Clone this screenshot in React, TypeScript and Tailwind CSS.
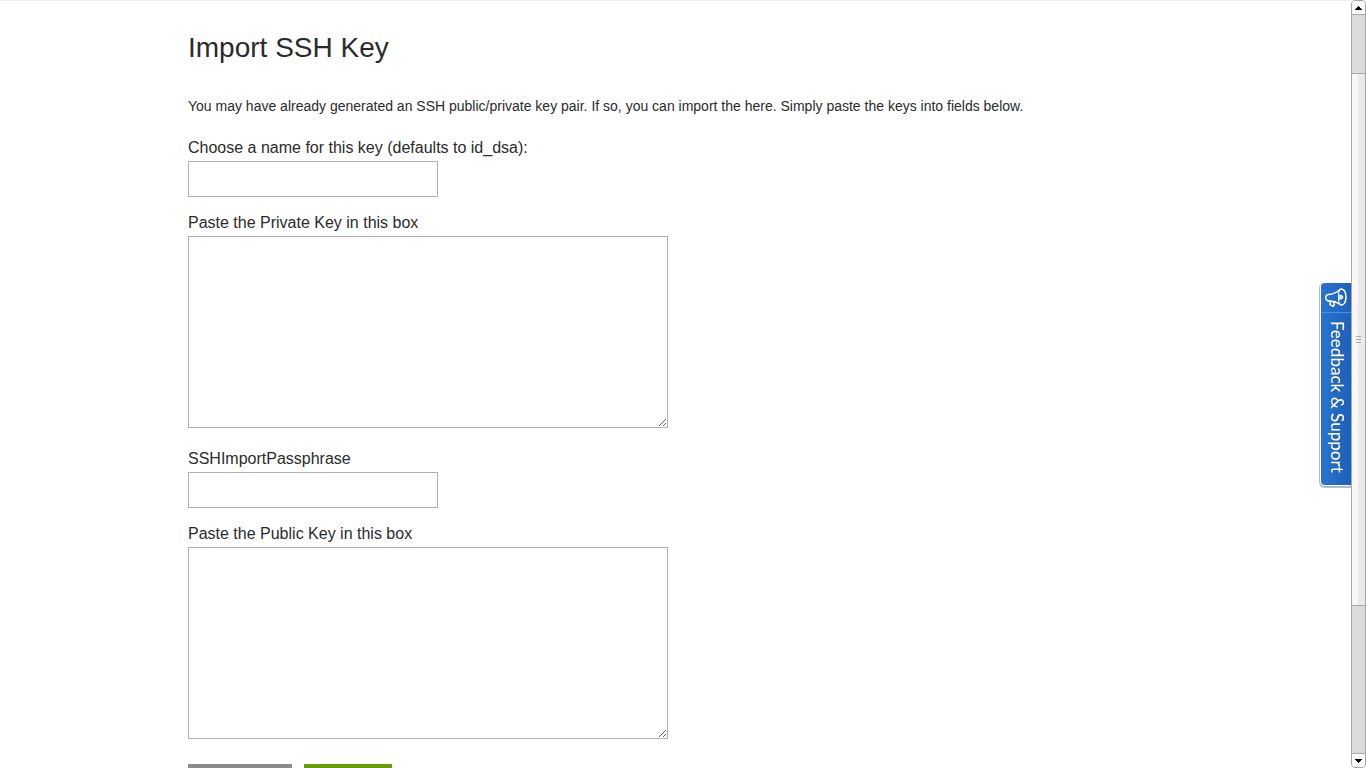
import React from 'react';

interface FieldProps {
    id: string;
    label: string;
    multiline?: boolean;
}

const Field: React.FC<FieldProps> = ({ id, label, multiline = false }) => {
    return (
        <div className={multiline ? 'mb-[21px]' : 'mb-4'}>
            <label htmlFor={id} className="mb-[3px] block text-base leading-5">
                {label}
            </label>
            {multiline ? (
                <textarea
                    id={id}
                    className="block h-48 w-full max-w-[480px] resize border border-[#b1b1b1] bg-white p-2 text-sm outline-none"
                />
            ) : (
                <input
                    id={id}
                    type="text"
                    className="block h-9 w-full max-w-[250px] border border-[#b1b1b1] bg-white px-2 text-sm outline-none"
                />
            )}
        </div>
    );
};

const MegaphoneIcon: React.FC = () => (
    <svg viewBox="0 0 24 22" className="h-[22px] w-6" fill="none" stroke="white" strokeWidth="1.5" strokeLinejoin="round" strokeLinecap="round" aria-hidden="true">
        <path d="M15.5 3C12 6 8.5 7.3 4.5 7.5C2.2 7.8 1.5 9 1.8 11C2 13 3 14 5 14C9 13.8 12 14.6 15.5 17" />
        <path d="M15.5 3C17 1.6 19.2 1.8 20.6 4C22.4 7 22.4 13 20.6 16C19.3 18.3 17 18.5 15.5 17" />
        <path d="M15.5 3C14 6.5 14 13.5 15.5 17" strokeWidth="1" />
        <path d="M5 14.2L6.6 15.2L6 17.6L9.2 19.4L10.4 17.2L9.6 16.3L11.2 14.6" />
        <path d="M15 8.2C17.6 7.6 19 8.8 19 10.2C19 11.6 17.6 12.8 15 12.2Z" fill="white" fillOpacity="0.8" strokeWidth="0.7" />
    </svg>
);

const FeedbackTab: React.FC = () => {
    return (
        <button
            type="button"
            className="absolute top-[282px] right-0 flex w-[30px] flex-col items-center rounded-l-sm bg-linear-to-r from-[#2973ce] to-[#1b61bd] pb-3 text-white shadow-[0_0_0_1px_white,0_1px_0_2px_#b4bac3]"
        >
            <span className="flex h-[29px] w-full items-center justify-center">
                <MegaphoneIcon />
            </span>
            <span className="flex w-full justify-end border-t border-[#4e90e0] pt-2 pr-1">
                <span className="font-['Lato',sans-serif] text-[17px] leading-5 font-medium [text-shadow:0_-1px_1px_#0d4288] [writing-mode:vertical-rl]">
                    Feedback &amp; Support
                </span>
            </span>
        </button>
    );
};

const ScrollRail: React.FC = () => {
    return (
        <div className="flex w-[15px] shrink-0 flex-col overflow-hidden rounded border border-[#a8a8a8] bg-[#dcdbda]" aria-hidden="true">
            <div className="flex h-[14px] shrink-0 items-center justify-center border-b border-[#a8a8a8] bg-[#fcfcfa]">
                <svg viewBox="0 0 7 4" className="h-1 w-[7px]" shapeRendering="crispEdges">
                    <path d="M3 0h1v1h1v1h1v1h1v1H0V3h1V2h1V1h1z" />
                </svg>
            </div>
            <div className="grow-[58]" />
            <div className="flex grow-[528] items-center justify-center border-y border-[#a8a8a8] bg-linear-to-r from-[#f8f7f5] from-50% to-[#eae9e7] to-50%">
                <div className="flex flex-col gap-[2px]">
                    <span className="h-px w-[5px] bg-[#a8a8a8]" />
                    <span className="h-px w-[5px] bg-[#a8a8a8]" />
                    <span className="h-px w-[5px] bg-[#a8a8a8]" />
                </div>
            </div>
            <div className="grow-[148]" />
            <div className="flex h-[14px] shrink-0 items-center justify-center border-t border-[#a8a8a8] bg-[#fcfcfa]">
                <svg viewBox="0 0 7 4" className="h-1 w-[7px]" shapeRendering="crispEdges">
                    <path d="M0 0h7v1H6v1H5v1H4v1H3V3H2V2H1V1H0z" />
                </svg>
            </div>
        </div>
    );
};

const App: React.FC = () => {
    return (
        <div className="flex h-screen bg-white font-['Liberation_Sans',Arial,sans-serif] text-[#2b2b2b]">
            <div className="relative min-w-0 flex-1 overflow-hidden border-t border-[#eeeeee]">
                <main className="mx-auto max-w-[975px] pt-[29px]">
                    <h1 className="mb-[30px] text-[28px] leading-9">Import SSH Key</h1>
                    <p className="mb-[22px] text-sm leading-5">
                        You may have already generated an SSH public/private key pair. If so, you can import the here. Simply paste the keys into fields below.
                    </p>
                    <form onSubmit={(e) => e.preventDefault()}>
                        <Field id="key-name" label="Choose a name for this key (defaults to id_dsa):" />
                        <Field id="private-key" label="Paste the Private Key in this box" multiline />
                        <Field id="passphrase" label="SSHImportPassphrase" />
                        <Field id="public-key" label="Paste the Public Key in this box" multiline />
                        <div className="flex gap-3 pt-1">
                            <button type="button" aria-label="Cancel" className="h-9 w-[104px] bg-[#8a8a8a]" />
                            <button type="submit" aria-label="Import" className="h-9 w-[88px] bg-[#679b08]" />
                        </div>
                    </form>
                </main>
                <FeedbackTab />
            </div>
            <ScrollRail />
        </div>
    );
};

export default App;
